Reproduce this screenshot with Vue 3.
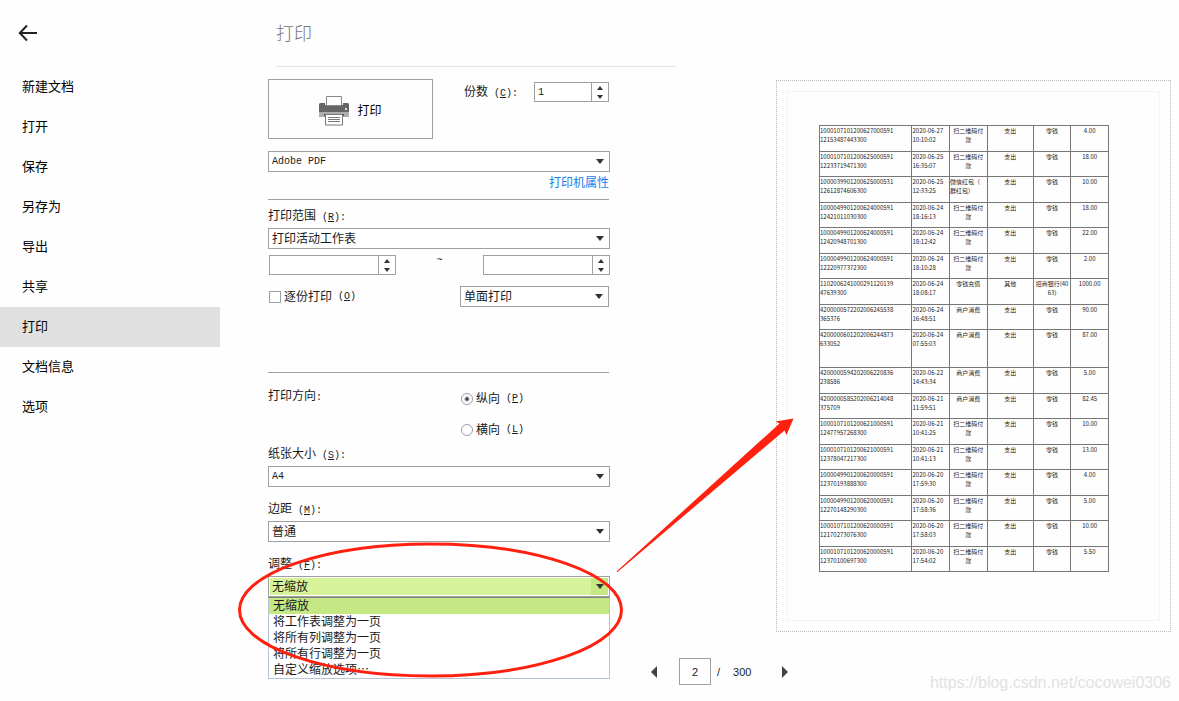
<script setup>
import { ref } from 'vue'

const menu = ['新建文档', '打开', '保存', '另存为', '导出', '共享', '打印', '文档信息', '选项']
const activeMenu = ref('打印')

const copies = ref('1')
const pageFrom = ref('')
const pageTo = ref('')
const printer = ref('Adobe PDF')
const range = ref('打印活动工作表')
const sides = ref('单面打印')
const collate = ref(false)
const orientation = ref('portrait')
const paper = ref('A4')
const margins = ref('普通')
const scaling = ref('无缩放')
const page = ref('2')

const scalingOptions = ['无缩放', '将工作表调整为一页', '将所有列调整为一页', '将所有行调整为一页', '自定义缩放选项⋯']

function step(target, delta) {
  const next = (parseInt(target.value, 10) || 0) + delta
  target.value = String(Math.max(1, next))
}
const stepCopies = (d) => step(copies, d)
const stepFrom = (d) => step(pageFrom, d)
const stepTo = (d) => step(pageTo, d)
const stepPage = (d) => step(page, d)

const scan = '扫二维码付\n款'
const shop = '商户消费'
const rows = [
  ['1000107101200627000591\n12153487443300', '2020-06-27\n10:10:02', scan, '支出', '零钱', '4.00'],
  ['1000107101200625000591\n12233719471300', '2020-06-25\n16:35:07', scan, '支出', '零钱', '18.00'],
  ['1000039901200625000531\n12612874606300', '2020-06-25\n12:33:25', '微信红包（\n群红包）', '支出', '零钱', '10.00'],
  ['1000049901200624000591\n12421011030300', '2020-06-24\n18:16:13', scan, '支出', '零钱', '18.00'],
  ['1000049901200624000591\n12420948701300', '2020-06-24\n18:12:42', scan, '支出', '零钱', '22.00'],
  ['1000049901200624000591\n12220977372300', '2020-06-24\n18:10:28', scan, '支出', '零钱', '2.00'],
  ['1102006241000291120139\n47639300', '2020-06-24\n18:08:17', '零钱充值', '其他', '招商银行(40\n63)', '1000.00'],
  ['4200000572202006245538\n365376', '2020-06-24\n16:48:51', shop, '支出', '零钱', '90.00'],
  ['4200000601202006244873\n633052', '2020-06-24\n07:55:03', shop, '支出', '零钱', '87.00'],
  ['4200000594202006220836\n238586', '2020-06-22\n14:43:34', shop, '支出', '零钱', '5.00'],
  ['4200000585202006214048\n375709', '2020-06-21\n11:59:51', shop, '支出', '零钱', '82.45'],
  ['1000107101200621000591\n12477957268300', '2020-06-21\n10:41:25', scan, '支出', '零钱', '10.00'],
  ['1000107101200621000591\n12378047217300', '2020-06-21\n10:41:13', scan, '支出', '零钱', '13.00'],
  ['1000049901200620000591\n12370193888300', '2020-06-20\n17:59:30', scan, '支出', '零钱', '4.00'],
  ['1000049901200620000591\n12270148290300', '2020-06-20\n17:58:36', scan, '支出', '零钱', '5.00'],
  ['1000107101200620000591\n12170273076300', '2020-06-20\n17:58:03', scan, '支出', '零钱', '10.00'],
  ['1000107101200620000591\n12370100697300', '2020-06-20\n17:54:02', scan, '支出', '零钱', '5.50'],
]
</script>

<template>
  <div class="app">
    <aside class="sidebar">
      <button class="back" type="button" aria-label="返回">
        <svg width="20" height="18" viewBox="0 0 20 18" fill="none" stroke="#222" stroke-width="2">
          <path d="M19 9H2M9 1.5L1.8 9L9 16.5" />
        </svg>
      </button>
      <nav class="menu">
        <a
          v-for="item in menu"
          :key="item"
          href="#"
          class="menu-item"
          :class="{ active: item === activeMenu }"
          @click.prevent="activeMenu = item"
        >{{ item }}</a>
      </nav>
    </aside>

    <main class="main">
      <header class="head"><h1>打印</h1></header>

      <div class="columns">
        <form class="settings" @submit.prevent>
          <div class="top-row">
            <button class="print" type="button">
              <svg width="30" height="30" viewBox="0 0 30 30">
                <path d="M1 7h5v2h18V7h5l1 1v9H0V8z" fill="#666" />
                <path d="M0 16h30v5H0z" fill="#adadad" />
                <path d="M5 18h20v2H5z" fill="#555" />
                <path d="M7.5 .5h15v9h-15z" fill="#fff" stroke="#888" />
                <path d="M26 12h2v2h-2z" fill="#ddd" />
                <path d="M6.5 18.5h17v10.500h-17z" fill="#fff" stroke="#777" />
                <path d="M9 21.500h12M9 23.500h12M9 25.500h12" stroke="#777" />
              </svg>
              <span>打印</span>
            </button>
            <div class="copies">
              <label for="copies">份数<span class="key"> (<u>C</u>):</span></label>
              <div class="spinner short">
                <input id="copies" v-model="copies" type="text" inputmode="numeric" />
                <div class="steps">
                  <button type="button" aria-label="增加份数" @click="stepCopies(1)"><i class="up"></i></button>
                  <button type="button" aria-label="减少份数" @click="stepCopies(-1)"><i class="down"></i></button>
                </div>
              </div>
            </div>
          </div>

          <div class="select">
            <select v-model="printer" class="latin" aria-label="打印机"><option>Adobe PDF</option></select>
            <i class="caret"></i>
          </div>
          <a class="props" href="#" @click.prevent>打印机属性</a>
          <hr />

          <label class="caption range-caption" for="range">打印范围<span class="key"> (<u>R</u>):</span></label>
          <div class="select">
            <select id="range" v-model="range"><option>打印活动工作表</option></select>
            <i class="caret"></i>
          </div>
          <div class="range-row">
            <div class="spinner">
              <input v-model="pageFrom" type="text" aria-label="起始页" />
              <div class="steps">
                <button type="button" aria-label="增加起始页" @click="stepFrom(1)"><i class="up"></i></button>
                <button type="button" aria-label="减少起始页" @click="stepFrom(-1)"><i class="down"></i></button>
              </div>
            </div>
            <span class="tilde">~</span>
            <div class="spinner">
              <input v-model="pageTo" type="text" aria-label="结束页" />
              <div class="steps">
                <button type="button" aria-label="增加结束页" @click="stepTo(1)"><i class="up"></i></button>
                <button type="button" aria-label="减少结束页" @click="stepTo(-1)"><i class="down"></i></button>
              </div>
            </div>
          </div>
          <div class="collate-row">
            <label class="choice"><input v-model="collate" type="checkbox" />逐份打印<span class="key"> (<u>O</u>)</span></label>
            <div class="select half">
              <select v-model="sides" aria-label="单双面"><option>单面打印</option></select>
              <i class="caret"></i>
            </div>
          </div>
          <hr />

          <div class="direction" role="radiogroup" aria-labelledby="direction-caption">
            <span id="direction-caption" class="caption">打印方向<span class="key">:</span></span>
            <div class="radios">
              <label class="choice"><input v-model="orientation" type="radio" name="orientation" value="portrait" />纵向<span class="key"> (<u>P</u>)</span></label>
              <label class="choice"><input v-model="orientation" type="radio" name="orientation" value="landscape" />横向<span class="key"> (<u>L</u>)</span></label>
            </div>
          </div>

          <label class="caption" for="paper">纸张大小<span class="key"> (<u>S</u>):</span></label>
          <div class="select">
            <select id="paper" v-model="paper" class="latin"><option>A4</option></select>
            <i class="caret"></i>
          </div>

          <label class="caption spaced" for="margins">边距<span class="key"> (<u>M</u>):</span></label>
          <div class="select">
            <select id="margins" v-model="margins"><option>普通</option></select>
            <i class="caret"></i>
          </div>

          <label class="caption spaced" for="scaling">调整<span class="key"> (<u>F</u>):</span></label>
          <div class="select open">
            <select id="scaling" v-model="scaling">
              <option v-for="o in scalingOptions" :key="o">{{ o }}</option>
            </select>
            <i class="caret"></i>
            <ul class="dropdown" role="listbox" aria-label="调整">
              <li
                v-for="o in scalingOptions"
                :key="o"
                role="option"
                :aria-selected="o === scaling"
                :class="{ picked: o === scaling }"
                @click="scaling = o"
              >{{ o }}</li>
            </ul>
          </div>
        </form>

        <section class="preview">
          <div class="sheet">
            <div class="sheet-inner">
              <table>
                <colgroup>
                  <col class="c-id" /><col class="c-s" /><col class="c-s" /><col class="c-m" /><col class="c-s" /><col class="c-s" />
                </colgroup>
                <tbody>
                  <tr v-for="(row, r) in rows" :key="r">
                    <td v-for="(cell, c) in row" :key="c" :class="{ left: c < 2 || cell.startsWith('微信') }">{{ cell }}</td>
                  </tr>
                </tbody>
              </table>
            </div>
          </div>
          <div class="pager">
            <button type="button" aria-label="上一页" @click="stepPage(-1)"><i class="prev"></i></button>
            <input v-model="page" type="text" aria-label="页码" />
            <span class="slash">/</span>
            <span class="total">300</span>
            <button type="button" aria-label="下一页" @click="stepPage(1)"><i class="next"></i></button>
          </div>
        </section>
      </div>
    </main>

    <svg class="marks" width="820" height="690" viewBox="0 0 820 690" aria-hidden="true">
      <ellipse cx="430.500" cy="610" rx="191" ry="66" fill="none" stroke="#ff2010" stroke-width="3" />
      <path d="M616.500 571.500L779.500 423.500L775.500 421.500L793.500 418.500L786.500 435L784.500 430.500L617.500 572Z" fill="#ff2010" />
    </svg>
    <p class="watermark">https://blog.csdn.net/cocowei0306</p>
  </div>
</template>

<style>
body {
  margin: 0;
  background: #fefefe;
}
</style>

<style scoped>
* {
  box-sizing: border-box;
}
.app {
  position: relative;
  display: flex;
  min-height: 100vh;
  font: 12px/16px "Liberation Sans", "Noto Sans CJK SC", sans-serif;
  color: #1a1a1a;
}
button,
input,
select {
  font: inherit;
  color: inherit;
  margin: 0;
  padding: 0;
  border: 0;
  border-radius: 0;
  background: none;
}
button {
  cursor: pointer;
}
input:focus,
select:focus {
  outline: none;
}

.sidebar {
  flex: 0 0 220px;
}
.back {
  display: flex;
  align-items: center;
  height: 66px;
  margin-bottom: 1px;
  padding-left: 18px;
}
.menu {
  display: flex;
  flex-direction: column;
}
.menu-item {
  height: 40px;
  padding-left: 22px;
  font-size: 13px;
  line-height: 40px;
  color: #000;
  text-decoration: none;
}
.menu-item.active {
  background: #e0e0e0;
}

.main {
  flex: 1;
  min-width: 0;
}
.head {
  width: 400px;
  height: 67px;
  margin-left: 56px;
  border-bottom: 1px solid #e4e4e4;
}
h1 {
  margin: 0;
  font-size: 18px;
  font-weight: 300;
  line-height: 68px;
  color: #777;
}
.columns {
  display: flex;
  gap: 40px;
  padding: 12px 8px 0 48px;
}

.settings {
  flex: 0 0 342px;
}
.key,
.latin {
  font-family: "Liberation Mono", monospace;
  font-size: 10px;
}
.key {
  line-height: 10px;
  white-space: pre;
}
.top-row {
  display: flex;
  justify-content: space-between;
  align-items: flex-start;
  height: 60px;
  margin-bottom: 12px;
}
.print {
  display: flex;
  align-items: center;
  justify-content: center;
  gap: 8px;
  width: 165px;
  height: 60px;
  padding-top: 4px;
  border: 1px solid #a0a0a0;
  color: #000;
}
.copies {
  display: flex;
  align-items: center;
  gap: 16px;
  padding: 3px 1px 0 0;
}
.spinner {
  display: flex;
  width: 127px;
  height: 20px;
  border: 1px solid #a0a0a0;
  background: #fff;
}
.spinner.short {
  width: 75px;
}
.spinner input {
  flex: 1;
  min-width: 0;
  padding-left: 3px;
  font: 10px "Liberation Mono", monospace;
}
.steps {
  display: flex;
  flex-direction: column;
  width: 17px;
  border-left: 1px solid #a0a0a0;
}
.steps button {
  display: flex;
  flex: 1;
  align-items: center;
  justify-content: center;
}
.up,
.down {
  border: 3px solid transparent;
}
.up {
  border-top: 0;
  border-bottom: 4px solid #333;
}
.down {
  border-bottom: 0;
  border-top: 4px solid #333;
}
.select {
  position: relative;
  height: 21px;
  border: 1px solid #a0a0a0;
  background: #fff;
}
.select select {
  display: block;
  width: 100%;
  height: 100%;
  padding-left: 3px;
  appearance: none;
}
.select .latin {
  font-family: "Liberation Mono", monospace;
  font-size: 10px;
}
.caret {
  position: absolute;
  top: 7px;
  right: 5px;
  border: 4px solid transparent;
  border-top: 5px solid #333;
  border-bottom: 0;
  pointer-events: none;
}
.half {
  width: 149px;
}
.props {
  display: block;
  line-height: 22px;
  text-align: right;
  padding-right: 1px;
  color: #1a7df0;
  text-decoration: none;
}
hr {
  height: 1px;
  margin: 5px 1px 0 0;
  border: 0;
  background: #a0a0a0;
}
.caption {
  display: block;
  height: 24px;
  line-height: 24px;
}
.range-caption {
  margin-top: 4px;
}
.spaced {
  margin-top: 10px;
}
.range-row {
  display: flex;
  justify-content: space-between;
  margin-top: 6px;
  padding-left: 1px;
}
.tilde {
  font: 10px/12px "Liberation Mono", monospace;
}
.collate-row {
  display: flex;
  justify-content: space-between;
  align-items: center;
  margin: 11px 1px 65px 1px;
}
.choice {
  display: flex;
  align-items: center;
  height: 24px;
}
.collate-row .choice {
  height: 18px;
}
.choice input {
  appearance: none;
  width: 12px;
  height: 12px;
  margin-right: 3px;
  border: 1px solid #9aa0a8;
  background: #fff;
}
.choice input[type="radio"] {
  border-radius: 50%;
}
.choice input[type="radio"]:checked {
  background: radial-gradient(circle, #445 0 1px, #fff 3px);
}
.choice input[type="checkbox"]:checked {
  background: #556;
}
.direction {
  display: flex;
  align-items: flex-start;
  margin-top: 11px;
}
.direction .caption {
  width: 193px;
}
.radios {
  display: flex;
  flex-direction: column;
  gap: 7px;
  padding-top: 3px;
}
.open {
  padding: 1px;
}
.open select {
  background: linear-gradient(to right, #d6f399 calc(100% - 17px), #c6e884 0);
  padding-left: 2px;
}
.dropdown {
  position: absolute;
  top: 20px;
  left: -1px;
  right: -1px;
  margin: 0;
  padding: 0;
  border: 1px solid #b8c4d4;
  border-top-color: #808080;
  background: #fff;
  list-style: none;
}
.dropdown li {
  height: 16px;
  padding-left: 4px;
}
.dropdown .picked {
  background: #c6e884;
}

.preview {
  flex: 1;
  min-width: 0;
  padding-top: 1px;
}
.sheet {
  margin-left: 126px;
  padding: 10px;
  border: 1px dotted #bbb;
}
.sheet-inner {
  padding: 33px 50px 48px 31px;
  border: 1px solid #f4f4f4;
}
table {
  width: 100%;
  table-layout: fixed;
  border-collapse: collapse;
  font: 6px/9px "Noto Sans CJK SC", sans-serif;
  color: #222;
}
.c-id {
  width: 32%;
}
.c-s {
  width: 13%;
}
.c-m {
  width: 16%;
}
tr {
  height: 25px;
}
tr:nth-child(odd):nth-child(-n + 8),
tr:nth-child(even):nth-child(n + 10) {
  height: 26px;
}
tr:nth-child(9) {
  height: 38px;
}
td {
  padding: 0;
  border: 1px solid #777;
  text-align: center;
  vertical-align: top;
  white-space: pre;
}
td.left {
  text-align: left;
}
.pager {
  display: flex;
  align-items: center;
  height: 27px;
  margin-top: 26px;
  font-size: 11px;
}
.pager button {
  display: flex;
  justify-content: center;
  width: 8px;
}
.pager input {
  width: 32px;
  height: 27px;
  margin: 0 6px 0 21px;
  border: 1px solid #a0a0a0;
  background: #fff;
  text-align: center;
}
.total {
  margin: 0 30px 0 13px;
}
.prev,
.next {
  border: 6px solid transparent;
}
.prev {
  border-left: 0;
  border-right: 6px solid #444;
}
.next {
  border-right: 0;
  border-left: 6px solid #444;
}

.marks {
  position: absolute;
  top: 0;
  left: 0;
  pointer-events: none;
}
.watermark {
  position: absolute;
  right: 8px;
  bottom: 8px;
  margin: 0;
  font-size: 16px;
  line-height: 20px;
  color: #e2e2e2;
}
</style>
